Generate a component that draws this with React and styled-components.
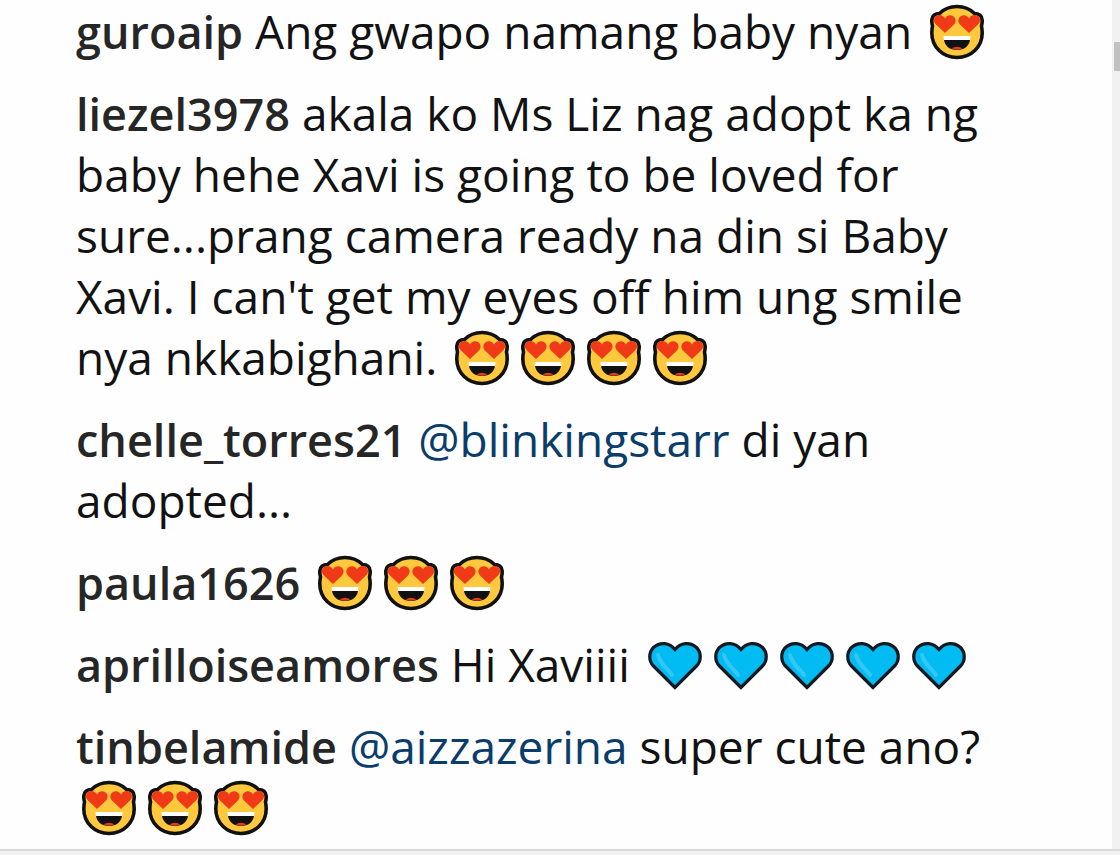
import React from "react";
import styled, { createGlobalStyle } from "styled-components";

const GlobalStyle = createGlobalStyle`
  * {
    box-sizing: border-box;
  }
  body {
    margin: 0;
    background: #fefefe;
    color: #121212;
    font-family: "Segoe UI", "Open Sans", "Noto Sans", sans-serif;
  }
`;

const Page = styled.div`
  display: flex;
  flex-direction: column;
  min-height: 100vh;
`;

const Content = styled.div`
  display: flex;
  flex: 1;
`;

const Comments = styled.ul`
  flex: 1;
  display: flex;
  flex-direction: column;
  gap: 21px;
  margin: 0;
  padding: 1px 76px 0;
  list-style: none;
`;

const Comment = styled.li`
  font-size: 46px;
  line-height: 61px;
  white-space: nowrap;
`;

const Username = styled.a`
  color: #262626;
  font-size: 45px;
  font-weight: 600;
  line-height: 1;
  text-decoration: none;
`;

const Mention = styled.a`
  color: #0b3d6b;
  text-decoration: none;
`;

const Emoji = styled.svg`
  width: 56px;
  height: 56px;
  margin: 0 5px;
  vertical-align: -11px;
`;

const ScrollTrack = styled.div`
  width: 8px;
  padding: 42px 0 0 2px;
  background: #f1f1f1;
`;

const ScrollThumb = styled.div`
  height: 29px;
  background: #c1c1c1;
`;

const BottomEdge = styled.footer`
  height: 6px;
  border-top: 2px solid #d9d9d9;
  background: #f1f1f1;
`;

const HeartEyes = () => (
  <Emoji viewBox="0 0 56 56" role="img" aria-label="heart eyes">
    <path
      d="M28 2.500C21 2.500 15 5 10.500 9.500C6 9.500 3 12 2.800 16C2.700 18 2.900 20 3.500 22C3 24.500 2.800 26.500 2.800 29C2.800 43 14 53.500 28 53.500S53.200 43 53.200 29C53.200 26.500 53 24.500 52.500 22C53.100 20 53.300 18 53.200 16C53 12 50 9.500 45.500 9.500C41 5 35 2.500 28 2.500Z"
      fill="#ffc83d"
      stroke="#111"
      strokeWidth="3.600"
      strokeLinejoin="round"
    />
    <path
      d="M16 29L6.500 20C3.500 16.500 5 11.500 9.500 11C12.500 10.700 14.800 12 16 14.500C17.500 12 20 10.800 22.500 11.500C27 12.700 27.800 17.500 25 20.500Z"
      fill="#f03a17"
    />
    <path
      d="M40 29L49.500 20C52.500 16.500 51 11.500 46.500 11C43.500 10.700 41.200 12 40 14.500C38.500 12 36 10.800 33.500 11.500C29 12.700 28.200 17.500 31 20.500Z"
      fill="#f03a17"
    />
    <path d="M14.500 32H41.500L41 37H15Z" fill="#fff" />
    <path d="M15 36H41C40 42 35.500 46 28 46S16 42 15 36Z" fill="#111" />
    <path d="M22.500 44.300Q28 41 33.500 44.300Q28 47 22.500 44.300Z" fill="#e33b20" />
  </Emoji>
);

const BlueHeart = () => (
  <Emoji viewBox="0 0 56 56" role="img" aria-label="blue heart">
    <path
      d="M28 50.500L6.500 29C1.500 24 1.500 15.500 6.500 10.500C13 4.500 22.500 5.500 28 12.500C33.500 5.500 43 4.500 49.500 10.500C54.500 15.500 54.500 24 49.500 29Z"
      fill="#00bcf2"
      stroke="#111a22"
      strokeWidth="3.200"
      strokeLinejoin="miter"
    />
    <path
      d="M11 18C13 27 20 31 25 38"
      fill="none"
      stroke="#35c6f4"
      strokeWidth="4"
      strokeLinecap="round"
    />
  </Emoji>
);

const repeat = (Icon, count) =>
  Array.from({ length: count }, (_, i) => <Icon key={i} />);

const App = () => {
  return (
    <Page>
      <GlobalStyle />
      <Content>
        <Comments>
          <Comment>
            <Username href="#guroaip">guroaip</Username> Ang gwapo namang baby
            nyan <HeartEyes />
          </Comment>
          <Comment>
            <Username href="#liezel3978">liezel3978</Username> akala ko Ms Liz
            nag adopt ka ng
            <br />
            baby hehe Xavi is going to be loved for
            <br />
            sure...prang camera ready na din si Baby
            <br />
            Xavi. I can't get my eyes off him ung smile
            <br />
            nya nkkabighani. {repeat(HeartEyes, 4)}
          </Comment>
          <Comment>
            <Username href="#chelle_torres21">chelle_torres21</Username>{" "}
            <Mention href="#blinkingstarr">@blinkingstarr</Mention> di yan
            <br />
            adopted...
          </Comment>
          <Comment>
            <Username href="#paula1626">paula1626</Username>{" "}
            {repeat(HeartEyes, 3)}
          </Comment>
          <Comment>
            <Username href="#aprilloiseamores">aprilloiseamores</Username> Hi
            Xaviiii {repeat(BlueHeart, 5)}
          </Comment>
          <Comment>
            <Username href="#tinbelamide">tinbelamide</Username>{" "}
            <Mention href="#aizzazerina">@aizzazerina</Mention> super cute ano?
            <br />
            {repeat(HeartEyes, 3)}
          </Comment>
        </Comments>
        <ScrollTrack>
          <ScrollThumb />
        </ScrollTrack>
      </Content>
      <BottomEdge />
    </Page>
  );
};

export default App;
